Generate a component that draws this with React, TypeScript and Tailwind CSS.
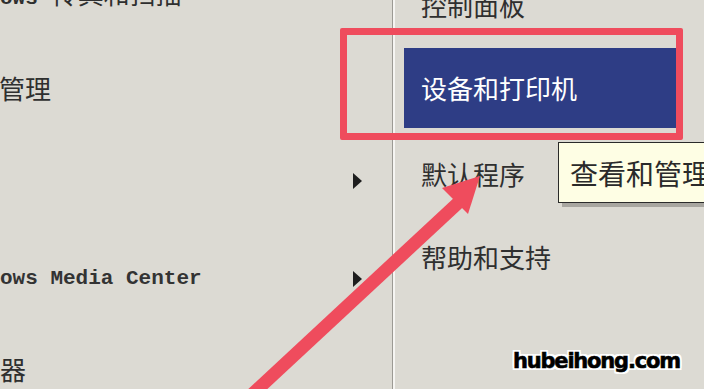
import React from "react";

const cjk = { fontFamily: '"Noto Sans CJK SC", "Noto Sans", sans-serif' } as const;
const mono = { fontFamily: '"Liberation Mono", "DejaVu Sans Mono", monospace' } as const;

function Tri() {
  return (
    <svg width="9" height="16" viewBox="0 0 9 16" className="block">
      <polygon points="0,0 9,8 0,16" fill="#1e1e1e" />
    </svg>
  );
}

export default function App() {
  return (
    <div className="relative w-[704px] h-[389px] overflow-hidden bg-[#dcdad3] text-[#2f2f2f]">
      <div className="flex h-full">
        {/* left panel */}
        <div className="w-[392px] shrink-0 flex flex-col -mt-[52px]">
          <div className="h-[93px] shrink-0 flex items-center">
            <div className="flex items-baseline">
              <span className="text-[21px] leading-none font-bold" style={mono}>ows</span>
              <span className="text-[26px] leading-none ml-[14px]" style={cjk}>传真和扫描</span>
            </div>
          </div>
          <div className="h-[93px] shrink-0 flex items-center">
            <span className="text-[26px] leading-none -ml-[1px]" style={cjk}>管理</span>
          </div>
          <div className="h-[93px] shrink-0 flex items-center justify-end pr-[30px]">
            <Tri />
          </div>
          <div className="h-[93px] shrink-0 flex items-center justify-between pr-[30px] pt-[10px]">
            <span className="text-[21px] leading-none font-bold text-[#333]" style={mono}>ows Media Center</span>
            <Tri />
          </div>
          <div className="h-[93px] shrink-0 flex items-center pt-[4px]">
            <span className="text-[26px] leading-none" style={cjk}>器</span>
          </div>
        </div>
        {/* divider */}
        <div className="w-[1px] h-full bg-[#9c9a94]" />
        <div className="w-[2px] h-full bg-[#f6f5f2]" />
        {/* right panel */}
        <div className="flex-1 flex flex-col -mt-[38px]">
          <div className="h-[85px] shrink-0 flex items-center pl-[26px]">
            <span className="text-[26px] leading-none" style={cjk}>控制面板</span>
          </div>
          <div className="h-[85px] shrink-0 pt-[1px] pl-[9px]">
            <div className="w-[273px] h-[80px] bg-[#2e3d85] flex items-center pl-[17px]">
              <span className="text-[26px] leading-none text-white" style={cjk}>设备和打印机</span>
            </div>
          </div>
          <div className="h-[85px] shrink-0 flex items-center pl-[26px] pb-[2px]">
            <span className="text-[26px] leading-none" style={cjk}>默认程序</span>
          </div>
          <div className="h-[85px] shrink-0 flex items-center pl-[26px] pb-[6px]">
            <span className="text-[26px] leading-none" style={cjk}>帮助和支持</span>
          </div>
        </div>
      </div>

      {/* tooltip */}
      <div className="absolute left-[558px] top-[142px] w-[180px] h-[61px] bg-[#fefee4] border-[1.5px] border-[#2a2a2a] shadow-[4px_4px_0_#a8a6a0] flex items-center pl-[11px]">
        <span className="text-[28px] leading-none whitespace-nowrap text-[#2a2a2a]" style={cjk}>查看和管理设备</span>
      </div>

      {/* red highlight box */}
      <div className="absolute left-[340px] top-[28px] w-[343px] h-[112px] border-[7px] border-[#ef4c5d] rounded-[2px]" />

      {/* arrow */}
      <svg className="absolute left-0 top-0" width="704" height="389" viewBox="0 0 704 389">
        <line x1="246" y1="400" x2="458" y2="203" stroke="#ef4c5d" strokeWidth="13" />
        <polygon points="480,176 442,188 468,214" fill="#ef4c5d" />
      </svg>

      {/* watermark */}
      <div
        className="absolute left-[513px] top-[351px] text-[21px] font-bold leading-none text-black tracking-[-1.2px] [text-shadow:2px_0_0_#fff,-2px_0_0_#fff,0_2px_0_#fff,0_-2px_0_#fff,2px_2px_0_#fff,-2px_-2px_0_#fff,2px_-2px_0_#fff,-2px_2px_0_#fff] [-webkit-text-stroke:0.6px_#000]"
        style={{ fontFamily: '"DejaVu Sans", Verdana, sans-serif' }}
      >
        hubeihong.com
      </div>
    </div>
  );
}
